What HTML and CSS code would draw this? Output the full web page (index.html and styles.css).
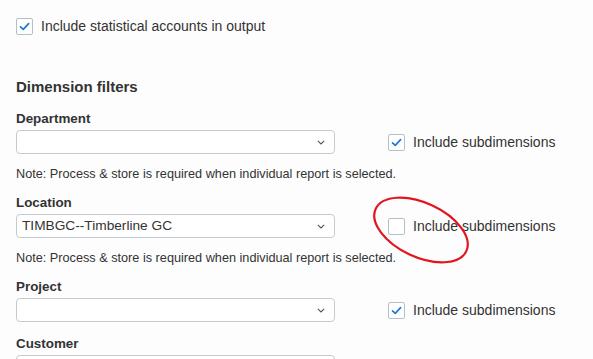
FILE: index.html
```html
<!DOCTYPE html>
<html>
<head>
<meta charset="utf-8">
<link rel="stylesheet" href="styles.css">
</head>
<body>
<div class="page">
  <label class="check-row">
    <span class="cb checked"><svg viewBox="0 0 17 17" width="17" height="17"><path d="M4.5 8.8 L7.3 11.4 L12.6 5.6" fill="none" stroke="#1f7bd1" stroke-width="1.7" stroke-linecap="round" stroke-linejoin="round"/></svg></span>
    <span class="check-text">Include statistical accounts in output</span>
  </label>

  <h2 class="heading">Dimension filters</h2>

  <div class="field">
    <div class="label">Department</div>
    <div class="row">
      <div class="select"><span class="value"></span><svg class="chev" viewBox="0 0 8 5" width="8" height="5"><path d="M0.8 0.8 L4 4 L7.2 0.8" fill="none" stroke="#555" stroke-width="1.1"/></svg></div>
      <label class="sub">
        <span class="cb checked"><svg viewBox="0 0 17 17" width="17" height="17"><path d="M4.5 8.8 L7.3 11.4 L12.6 5.6" fill="none" stroke="#1f7bd1" stroke-width="1.7" stroke-linecap="round" stroke-linejoin="round"/></svg></span>
        <span class="sub-text">Include subdimensions</span>
      </label>
    </div>
    <div class="note">Note: Process &amp; store is required when individual report is selected.</div>
  </div>

  <div class="field">
    <div class="label">Location</div>
    <div class="row">
      <div class="select"><span class="value">TIMBGC--Timberline GC</span><svg class="chev" viewBox="0 0 8 5" width="8" height="5"><path d="M0.8 0.8 L4 4 L7.2 0.8" fill="none" stroke="#555" stroke-width="1.1"/></svg></div>
      <label class="sub">
        <span class="cb"></span>
        <span class="sub-text">Include subdimensions</span>
      </label>
    </div>
    <div class="note">Note: Process &amp; store is required when individual report is selected.</div>
  </div>

  <div class="field">
    <div class="label">Project</div>
    <div class="row">
      <div class="select"><span class="value"></span><svg class="chev" viewBox="0 0 8 5" width="8" height="5"><path d="M0.8 0.8 L4 4 L7.2 0.8" fill="none" stroke="#555" stroke-width="1.1"/></svg></div>
      <label class="sub">
        <span class="cb checked"><svg viewBox="0 0 17 17" width="17" height="17"><path d="M4.5 8.8 L7.3 11.4 L12.6 5.6" fill="none" stroke="#1f7bd1" stroke-width="1.7" stroke-linecap="round" stroke-linejoin="round"/></svg></span>
        <span class="sub-text">Include subdimensions</span>
      </label>
    </div>
  </div>

  <div class="field">
    <div class="label">Customer</div>
    <div class="row">
      <div class="select"><span class="value"></span><svg class="chev" viewBox="0 0 8 5" width="8" height="5"><path d="M0.8 0.8 L4 4 L7.2 0.8" fill="none" stroke="#555" stroke-width="1.1"/></svg></div>
    </div>
  </div>

  <svg class="annotation" width="593" height="359" viewBox="0 0 593 359">
    <ellipse cx="421" cy="230" rx="50" ry="27" transform="rotate(25 421 230)" fill="none" stroke="#e3141f" stroke-width="2.2"/>
  </svg>
</div>
</body>
</html>
```

FILE: styles.css
```css
* { box-sizing: border-box; }
html, body {
  margin: 0;
  padding: 0;
  background: #fdfdfd;
  overflow: hidden;
}
body {
  font-family: "Liberation Sans", Arial, sans-serif;
  color: #333;
  width: 593px;
  height: 359px;
}
.page {
  position: relative;
  padding: 18px 16px 0 16px;
  height: 359px;
}
.check-row {
  display: flex;
  align-items: center;
  height: 17px;
}
.cb {
  width: 17px;
  height: 17px;
  border: 1px solid #b4c0c8;
  border-radius: 2px;
  background: #fff;
  display: flex;
  align-items: center;
  justify-content: center;
  flex: none;
}
.cb svg { display: block; margin: -1px; }
.check-text {
  margin-left: 8px;
  font-size: 14px;
  line-height: 17px;
}
.heading {
  margin: 43px 0 15px 0;
  font-size: 15px;
  line-height: 18px;
  font-weight: bold;
  color: #333;
}
.field {
  margin-bottom: 14px;
}
.label {
  font-size: 13.4px;
  line-height: 16px;
  font-weight: bold;
  color: #333;
  margin-bottom: 3px;
}
.row {
  display: flex;
  align-items: center;
  height: 24px;
}
.select {
  width: 319px;
  height: 24px;
  border: 1px solid #c3cbd1;
  border-radius: 4px;
  background: #fff;
  display: flex;
  align-items: center;
  justify-content: space-between;
  padding: 0 9px 0 5px;
  flex: none;
}
.value {
  font-size: 13.7px;
  line-height: 16px;
  color: #333;
}
.chev { display: block; }
.sub {
  display: flex;
  align-items: center;
  margin-left: 53px;
}
.sub-text {
  margin-left: 8px;
  font-size: 14px;
  line-height: 17px;
}
.note {
  margin-top: 13px;
  margin-bottom: 3px;
  font-size: 12.7px;
  line-height: 14px;
  color: #333;
}
.annotation {
  position: absolute;
  left: 0;
  top: 0;
  pointer-events: none;
}
```
